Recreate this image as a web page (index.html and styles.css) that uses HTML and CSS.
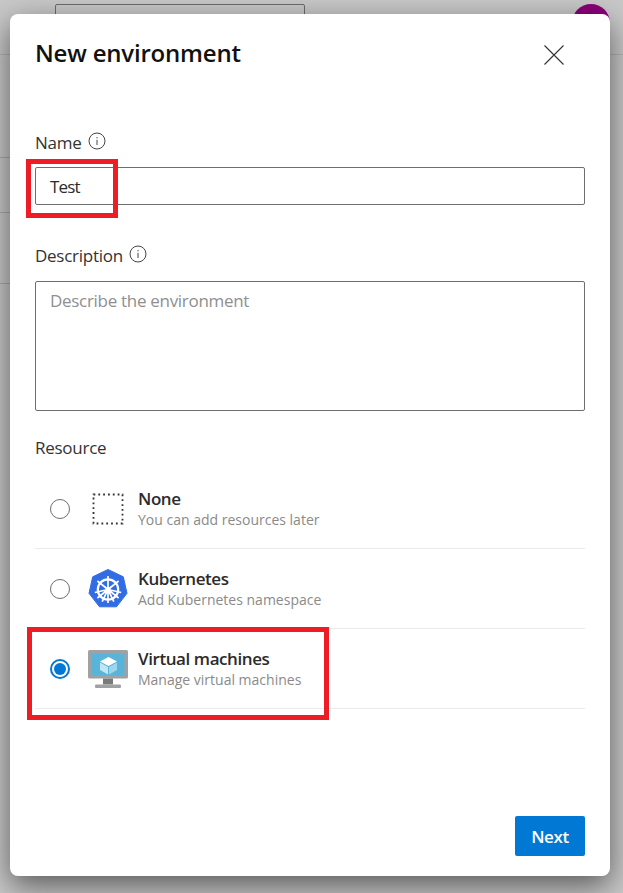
FILE: index.html
```html
<!DOCTYPE html>
<html lang="en">
<head>
<meta charset="utf-8">
<title>New environment</title>
<link rel="stylesheet" href="styles.css">
</head>
<body>
<div class="backdrop">
  <div class="topbar"><div class="search"></div><div class="avatar"></div></div>
  <div class="bg-band band-a"></div>
  <div class="bg-band band-b"></div>
  <div class="bg-band band-c"></div>
</div>
<main class="dialog">
  <header class="dialog-head">
    <h1 class="title">New environment</h1>
    <svg class="close" width="22" height="22" viewBox="0 0 22 22"><path d="M1.500 1.500L20.500 20.500M20.500 1.500L1.500 20.500" stroke="#333" stroke-width="1.100" fill="none"/></svg>
  </header>
  <div class="field field-name">
    <div class="label">Name <svg class="info" width="18" height="18" viewBox="0 0 18 18"><circle cx="9" cy="9" r="8" fill="none" stroke="#444" stroke-width="1"/><path d="M9 7.800V13M9 5v1.300" stroke="#444" stroke-width="1" fill="none"/></svg></div>
    <div class="input">Test<span class="mark mark-name"></span></div>
  </div>
  <div class="field field-desc">
    <div class="label">Description <svg class="info" width="18" height="18" viewBox="0 0 18 18"><circle cx="9" cy="9" r="8" fill="none" stroke="#444" stroke-width="1"/><path d="M9 7.800V13M9 5v1.300" stroke="#444" stroke-width="1" fill="none"/></svg></div>
    <div class="textarea">Describe the environment</div>
  </div>
  <div class="label resource-label">Resource</div>
  <div class="options">
    <div class="option">
      <span class="radio"></span>
      <svg class="opt-icon" width="40" height="40" viewBox="0 0 40 40"><rect x="5.500" y="5.500" width="29" height="29" fill="none" stroke="#333" stroke-width="1.800" stroke-dasharray="1.800 3.030"/></svg>
      <div class="opt-text"><div class="opt-name">None</div><div class="opt-sub">You can add resources later</div></div>
    </div>
    <div class="option">
      <span class="radio"></span>
      <svg class="opt-icon" width="40" height="40" viewBox="0 0 40 40">
        <path d="M20 .5L35.300 7.800L39 24.300L28.500 37.800H11.500L1 24.300L4.700 7.800Z" fill="#326ce5" stroke="#326ce5" stroke-linejoin="round" stroke-width="1"/>
        <circle cx="20" cy="20.500" r="10.200" fill="none" stroke="#fff" stroke-width="2.200"/>
        <circle cx="20" cy="20.500" r="2.600" fill="#fff"/>
        <path d="M20 7V34M9.400 12L30.600 29M30.600 12L9.400 29M6.800 23.500L20 20.500L33.200 23.500M14.200 32.600L20 20.500L25.800 32.600" stroke="#fff" stroke-width="1.700" fill="none"/>
      </svg>
      <div class="opt-text"><div class="opt-name">Kubernetes</div><div class="opt-sub">Add Kubernetes namespace</div></div>
    </div>
    <div class="option">
      <span class="radio radio-on"></span>
      <svg class="opt-icon" width="40" height="40" viewBox="0 0 40 40">
        <rect x="0" y="1" width="40" height="28.500" rx="1.500" fill="#a0a1a2"/>
        <rect x="3.500" y="4.500" width="33" height="22" fill="#59b4d9"/>
        <path d="M15 29.500h10v6H15z" fill="#7a7a7a"/>
        <rect x="7" y="35.500" width="26" height="3.500" rx="1" fill="#a0a1a2"/>
        <path d="M20.500 8L29 12.500L20.500 17L12 12.500Z" fill="#fff"/>
        <path d="M12 13.500L20 18V25.500L12 21Z" fill="#c3e6f5"/>
        <path d="M29 13.500L21 18V25.500L29 21Z" fill="#9fd5ec"/>
      </svg>
      <div class="opt-text"><div class="opt-name">Virtual machines</div><div class="opt-sub">Manage virtual machines</div></div>
    </div>
    <span class="mark mark-vm"></span>
  </div>
  <footer class="dialog-foot"><button class="next">Next</button></footer>
</main>
</body>
</html>
```
FILE: styles.css
```css
* { box-sizing: border-box; }
html, body { margin: 0; height: 100%; }
body {
  width: 623px; height: 893px; overflow: hidden; position: relative;
  background: #c8c8c8;
  font-family: "Open Sans", "Noto Sans", sans-serif;
  color: #2b2b2b;
}
.backdrop { position: absolute; inset: 0; }
.topbar { height: 55px; border-bottom: 1px solid #b4b4b4; position: relative; }
.search { position: absolute; left: 55px; top: 4px; width: 250px; height: 30px; border: 1px solid #6c6c6c; border-radius: 2px; }
.avatar { position: absolute; left: 572px; top: 4px; width: 38px; height: 38px; border-radius: 50%; background: #8a0078; }
.bg-band { position: absolute; left: 0; width: 100px; height: 1px; background: #a8a8a8; }
.band-a { top: 157px; }
.band-b { top: 212px; }
.band-c { top: 283px; }
.dialog {
  position: absolute; left: 10px; top: 14px; width: 600px; height: 862px;
  background: #fff; border-radius: 8px;
  box-shadow: 0 10px 30px rgba(0,0,0,.55);
  padding: 0 25px 20px 25px;
  display: flex; flex-direction: column;
}
.dialog-head { display: flex; justify-content: space-between; align-items: flex-start; padding-top: 22px; height: 113px; flex: none; }
.title { margin: 0; font-size: 24px; line-height: 34px; font-weight: 600; color: #111; letter-spacing: -.2px; }
.close { margin: 8px 20px 0 0; width: 22px; height: 22px; }
.label { font-size: 17px; line-height: 24px; color: #333; display: flex; align-items: center; gap: 6px; letter-spacing: -.26px; }
.info { margin-top: -4px; }
.field-name .label { height: 32px; }
.input { position: relative; height: 38px; border: 1px solid #6e6e6e; border-radius: 2px; padding-left: 14px; font-size: 17px; line-height: 38px; margin-top: 8px; letter-spacing: -.8px; }
.field-desc { margin-top: 39px; }
.field-desc .label { height: 24px; }
.textarea { height: 130px; margin-top: 13px; border: 1px solid #6e6e6e; border-radius: 2px; padding: 5px 14px; font-size: 17px; line-height: 28px; color: #8f8f8f; letter-spacing: -.3px; }
.resource-label { margin-top: 25px; }
.options { position: relative; margin-top: 9px; }
.option { display: flex; align-items: center; height: 80px; border-bottom: 1px solid #eaeaea; padding-left: 15px; }
.radio { width: 20px; height: 20px; border: 1px solid #6e6e6e; border-radius: 50%; flex: none; }
.radio-on { border: 2px solid #0078d4; position: relative; }
.radio-on::after { content: ""; position: absolute; inset: 2px; border-radius: 50%; background: #0078d4; }
.opt-icon { margin-left: 18px; flex: none; }
.opt-text { margin-left: 10px; }
.opt-name { font-size: 17px; line-height: 21px; font-weight: 600; color: #2b2b2b; letter-spacing: -.42px; }
.opt-sub { font-size: 14px; line-height: 21px; color: #8a8a8a; letter-spacing: 0; }
.dialog-foot { margin-top: auto; display: flex; justify-content: flex-end; }
.next { width: 70px; height: 40px; border: 0; border-radius: 2px; background: #0078d4; color: #fff; font: 600 17px "Open Sans", sans-serif; letter-spacing: -.4px; padding: 1px 0 0; }
.mark { position: absolute; border: 5px solid #ee1c25; pointer-events: none; }
.mark-name { left: -10px; top: -9px; width: 92px; height: 59px; }
.mark-vm { left: -8px; top: 158px; width: 302px; height: 93px; }
```
